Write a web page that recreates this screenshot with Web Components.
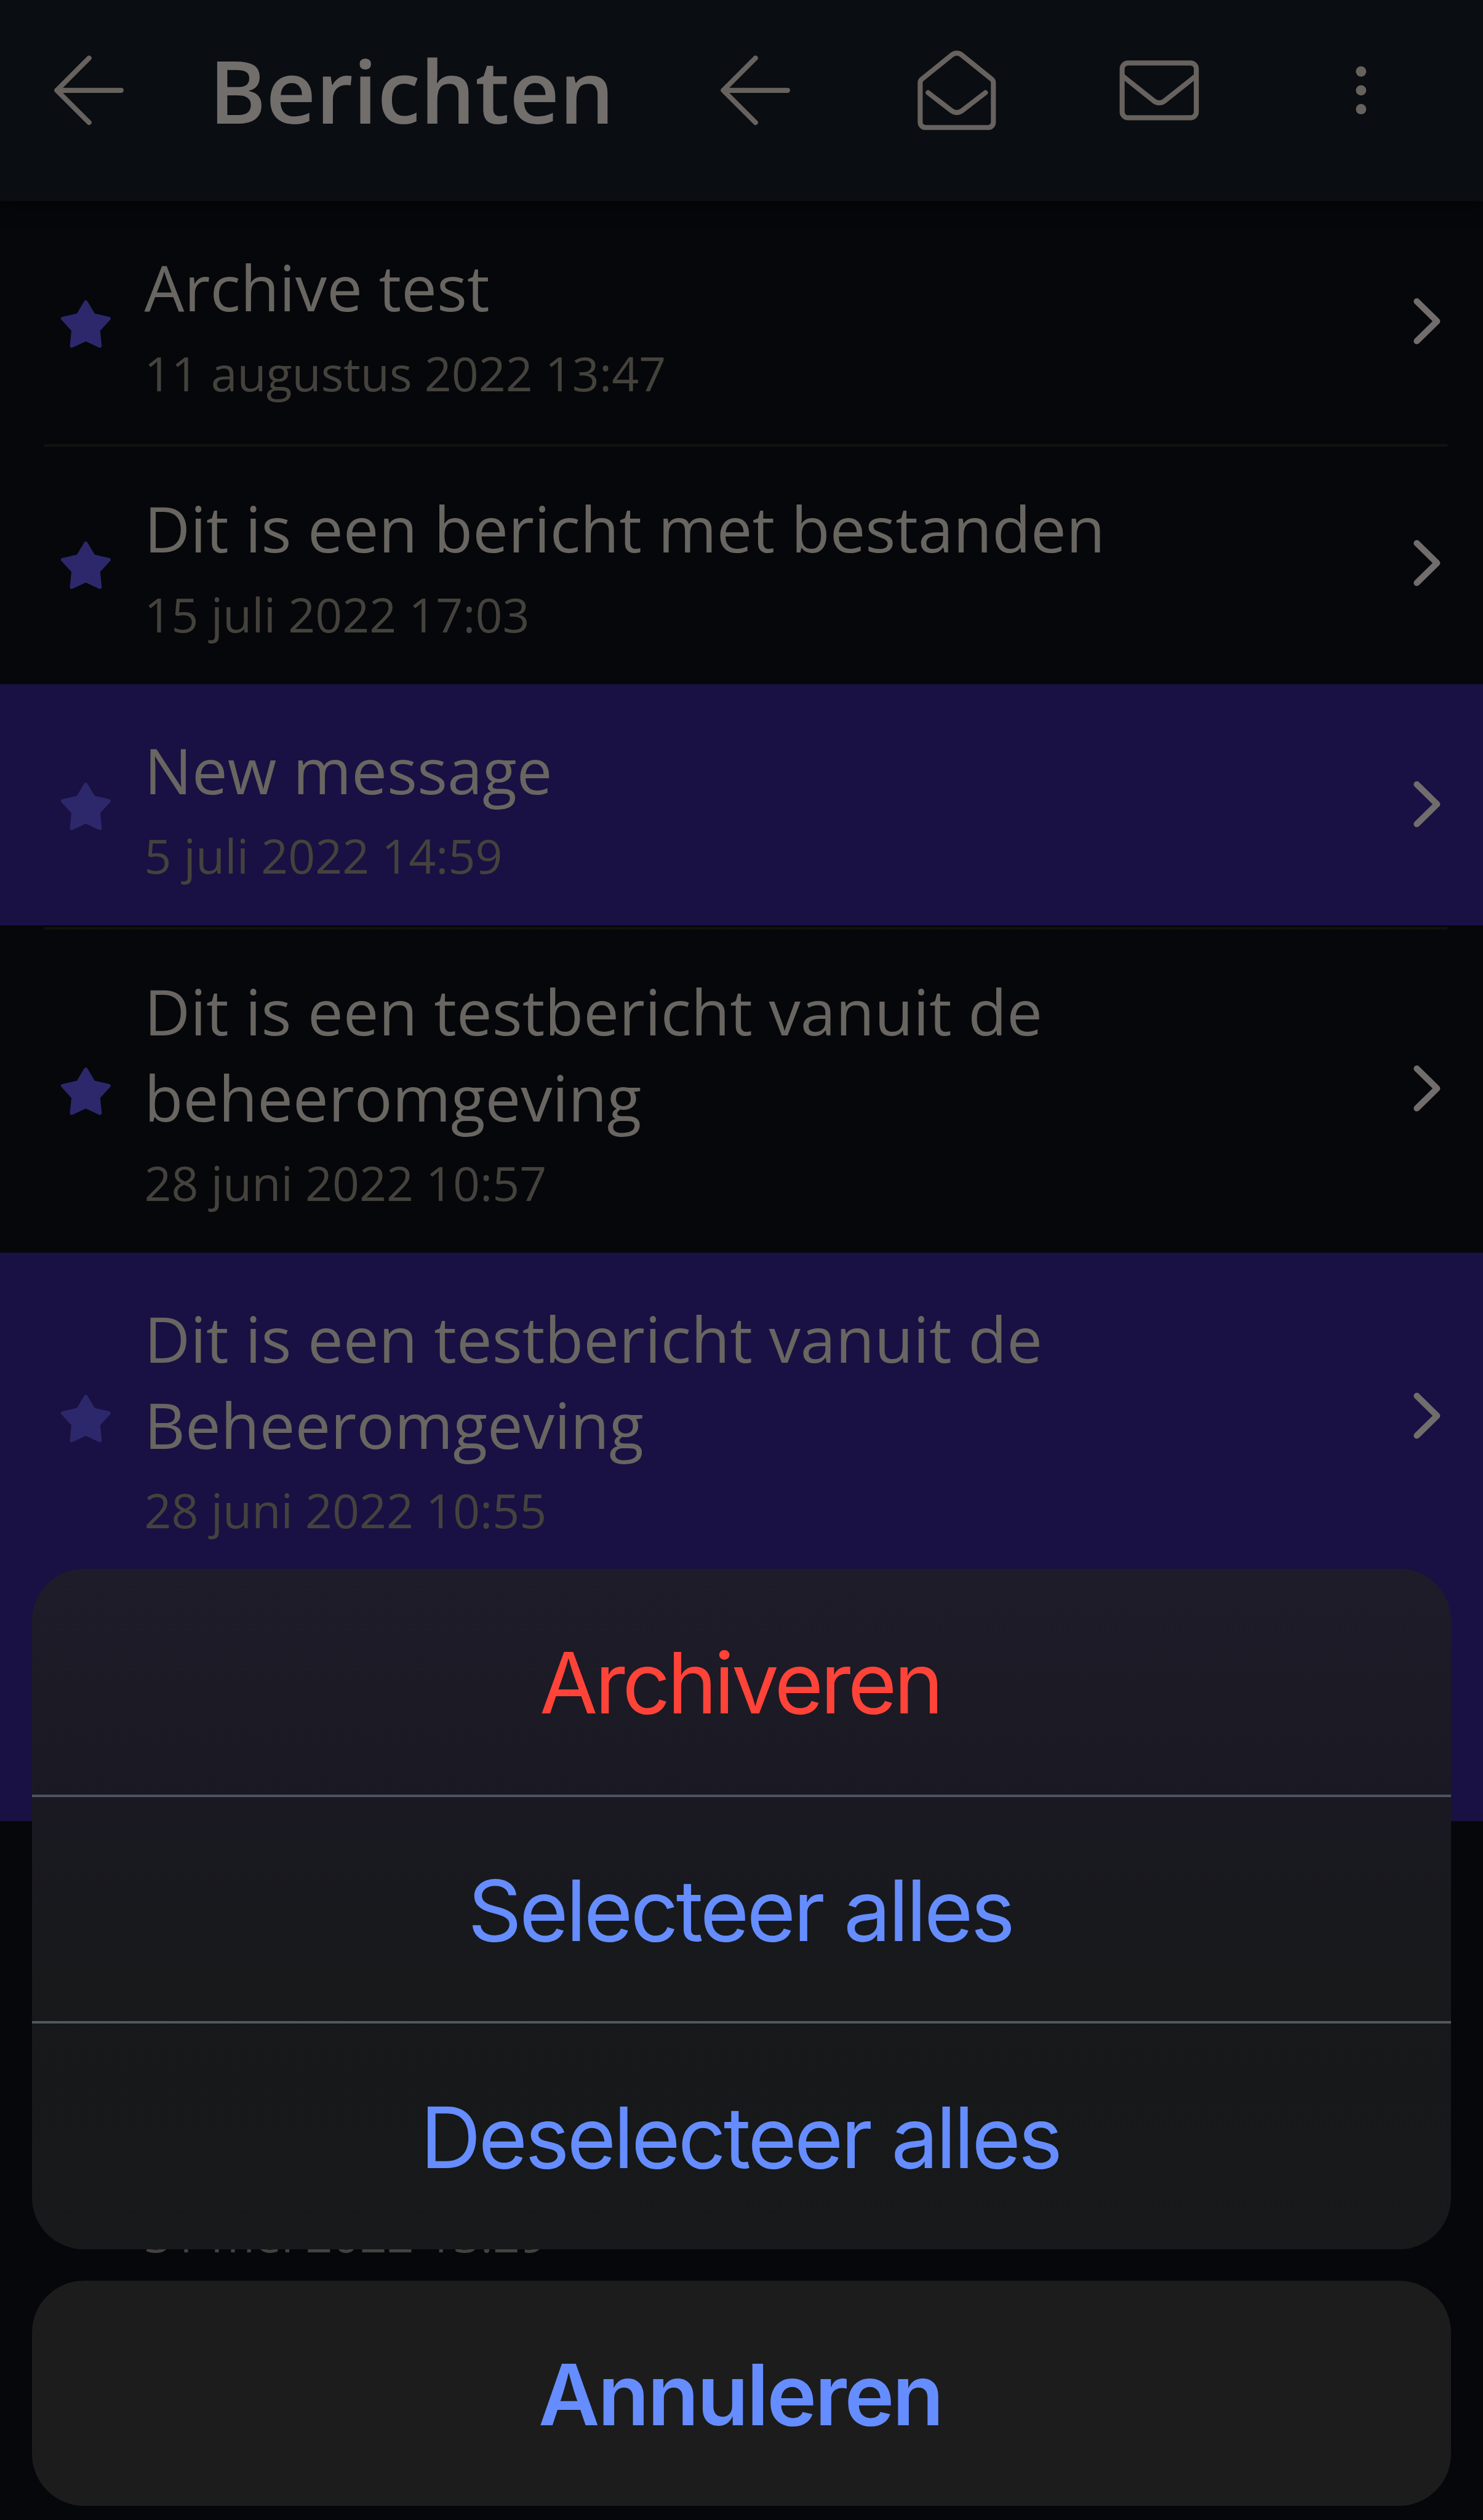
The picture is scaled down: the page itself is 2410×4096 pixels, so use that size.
<!DOCTYPE html>
<html lang="nl">
<head>
<meta charset="utf-8">
<title>Berichten</title>
<style>
  /* 1rem = 1 point on a 414 point wide phone */
  html {
    font-size: calc(100vw / 414);
  }
  body {
    margin: 0;
    background: #05070a;
    font-family: "Open Sans", sans-serif;
  }
</style>
</head>
<body>
<messages-screen>
  <app-header slot="header">
    Berichten
    <app-icon slot="back" name="arrow"></app-icon>
    <app-icon slot="actions" name="arrow"></app-icon>
    <app-icon slot="actions" name="mail-open"></app-icon>
    <app-icon slot="actions" name="mail"></app-icon>
    <app-icon slot="actions" name="dots"></app-icon>
  </app-header>

  <message-row>Archive test<span slot="date">11 augustus 2022 13:47</span></message-row>
  <message-row>Dit is een bericht met bestanden<span slot="date">15 juli 2022 17:03</span></message-row>
  <message-row selected>New message<span slot="date">5 juli 2022 14:59</span></message-row>
  <message-row>Dit is een testbericht vanuit de beheeromgeving<span slot="date">28 juni 2022 10:57</span></message-row>
  <message-row selected>Dit is een testbericht vanuit de Beheeromgeving<span slot="date">28 juni 2022 10:55</span></message-row>
  <message-row selected></message-row>
  <message-row></message-row>
  <message-row><span slot="date">31 mei 2022 13:29</span></message-row>

  <action-sheet slot="sheet">
    <sheet-button kind="danger">Archiveren</sheet-button>
    <sheet-button>Selecteer alles</sheet-button>
    <sheet-button>Deselecteer alles</sheet-button>
    <sheet-button slot="cancel" kind="cancel">Annuleren</sheet-button>
  </action-sheet>
</messages-screen>

<script>
const ICONS = {
  'arrow': '<path d="M21.1 12H3.15M12.15 3 3.15 12l9 9"/>',
  'mail-open': '<path d="M1.78 9.9v11a1.48 1.48 0 0 0 1.48 1.48h17.48a1.48 1.48 0 0 0 1.48-1.48v-11c0-.4-.17-.78-.48-1.04L13.35 2.1a2.1 2.1 0 0 0-2.7 0L2.26 8.86c-.31.26-.48.64-.48 1.04z"/><path d="m4 12.65 6.55 5.05a2.4 2.4 0 0 0 2.9 0L20 12.65"/>',
  'mail': '<rect x="1.65" y="4.37" width="20.7" height="15.28" rx="1.6"/><path d="m1.9 8.1 8.6 6.85a2.4 2.4 0 0 0 3 0l8.6-6.85"/>',
  'dots': '<g fill="currentColor" stroke="none"><circle cx="12" cy="6.75" r="1.45"/><circle cx="12" cy="12" r="1.45"/><circle cx="12" cy="17.25" r="1.45"/></g>'
};

class AppIcon extends HTMLElement {
  connectedCallback() {
    this.attachShadow({ mode: 'open' });
    this.shadowRoot.innerHTML = `
      <style>
        :host {
          display: block;
          width: 24rem;
          height: 24rem;
          color: #67625e;
        }
        svg {
          display: block;
          width: 100%;
          height: 100%;
        }
      </style>
      <svg viewBox="0 0 24 24" fill="none" stroke="currentColor" stroke-width="1.4" stroke-linecap="round" stroke-linejoin="round">
        ${ICONS[this.getAttribute('name')]}
      </svg>
    `;
  }
}
customElements.define('app-icon', AppIcon);

class AppHeader extends HTMLElement {
  connectedCallback() {
    this.attachShadow({ mode: 'open' });
    this.shadowRoot.innerHTML = `
      <style>
        :host {
          display: block;
          position: relative;
          background: #0a0d11;
          box-shadow: 0 1rem 4rem rgba(0, 0, 0, 0.6);
        }
        header {
          box-sizing: border-box;
          height: 56.15rem;
          padding: 0 22rem 5.6rem 12.75rem;
          display: flex;
          align-items: center;
        }
        h1 {
          margin: 0 0 0 21.6rem;
          font-size: 24.15rem;
          line-height: 32rem;
          font-weight: 600;
          color: #726e6c;
          white-space: nowrap;
        }
        .actions {
          margin-left: auto;
          display: flex;
          gap: 32.43rem;
        }
      </style>
      <header>
        <slot name="back"></slot>
        <h1><slot></slot></h1>
        <div class="actions"><slot name="actions"></slot></div>
      </header>
    `;
  }
}
customElements.define('app-header', AppHeader);

class MessageRow extends HTMLElement {
  connectedCallback() {
    this.attachShadow({ mode: 'open' });
    this.shadowRoot.innerHTML = `
      <style>
        :host {
          display: block;
          color: #696561;
        }
        .row {
          box-sizing: border-box;
          min-height: 67.4rem;
          padding: 0 11.9rem 0 17.05rem;
          display: flex;
          align-items: center;
          /* hairline sits just under the top edge of the row */
          background: linear-gradient(#12120f, #12120f) 12.3rem 0.5rem / 391.7rem 0.65rem no-repeat;
        }
        :host(:first-of-type) .row {
          background: none;
        }
        :host([selected]) .row {
          background: #191143;
        }
        .star {
          flex: none;
          width: 14rem;
          height: 13.6rem;
          margin: 1.1rem 9.25rem 0 0;
        }
        .text {
          flex: 1;
          align-self: flex-start;
          padding: 12.05rem 60rem 7.35rem 0;
        }
        .title {
          min-height: 24rem;
          font-size: 17.66rem;
          line-height: 24rem;
        }
        .date {
          min-height: 24rem;
          font-size: 13.23rem;
          line-height: 24rem;
          color: #45423d;
        }
        .chevron {
          flex: none;
          width: 8rem;
          height: 14rem;
          color: #716d6c;
        }
      </style>
      <div class="row">
        <svg class="star" viewBox="0 0 14 13.6" fill="#2d286b" stroke="#2d286b" stroke-width="1" stroke-linejoin="round">
          <path d="M6.95.7 9.1 4.3l4.3 1-2.95 3.2.45 4.45-3.95-1.85L3 12.95l.45-4.45L.5 5.3l4.3-1z"/>
        </svg>
        <div class="text">
          <div class="title"><slot></slot></div>
          <div class="date"><slot name="date"></slot></div>
        </div>
        <svg class="chevron" viewBox="0 0 8 14" fill="none" stroke="currentColor" stroke-width="1.75" stroke-linecap="round" stroke-linejoin="round">
          <path d="M1.45 1.35 7.1 6.9l-5.65 5.55"/>
        </svg>
      </div>
    `;
  }
}
customElements.define('message-row', MessageRow);

class SheetButton extends HTMLElement {
  connectedCallback() {
    this.attachShadow({ mode: 'open' });
    this.shadowRoot.innerHTML = `
      <style>
        :host {
          display: flex;
          justify-content: center;
          align-items: center;
          box-sizing: border-box;
          height: 63.3rem;
          padding: 0.7rem 0.7rem 0 0;
          font: 400 23.5rem/30rem Inter, sans-serif;
          letter-spacing: -0.7rem;
          color: #658dff;
          white-space: nowrap;
        }
        :host([kind="danger"]) {
          letter-spacing: -0.82rem;
          color: #ff4338;
        }
        :host([kind="cancel"]) {
          height: 62.8rem;
          font-weight: 600;
          letter-spacing: -0.52rem;
        }
      </style>
      <slot></slot>
    `;
  }
}
customElements.define('sheet-button', SheetButton);

class ActionSheet extends HTMLElement {
  connectedCallback() {
    this.attachShadow({ mode: 'open' });
    this.shadowRoot.innerHTML = `
      <style>
        :host {
          display: flex;
          flex-direction: column;
          gap: 8.9rem;
        }
        .group, .cancel {
          border-radius: 14.5rem;
          overflow: hidden;
        }
        .group {
          background: linear-gradient(#1e1c29, #1a1922 35%, #17191b 58%, #161819 75%, #17191a);
        }
        .cancel {
          background: #1c1c1c;
        }
        .group ::slotted(:first-child) {
          height: 62.95rem;
        }
        .group ::slotted(:not(:first-child)) {
          border-top: 0.7rem solid #4c5466;
        }
        .group ::slotted(:nth-child(3)) {
          height: 63.65rem;
          border-top-color: #4f585d;
        }
      </style>
      <div class="group"><slot></slot></div>
      <div class="cancel"><slot name="cancel"></slot></div>
    `;
  }
}
customElements.define('action-sheet', ActionSheet);

class MessagesScreen extends HTMLElement {
  connectedCallback() {
    this.attachShadow({ mode: 'open' });
    this.shadowRoot.innerHTML = `
      <style>
        :host {
          display: block;
          position: relative;
          height: 100vh;
          overflow: hidden;
        }
        .sheet {
          position: absolute;
          left: 8.87rem;
          right: 8.87rem;
          bottom: 3.95rem;
        }
      </style>
      <slot name="header"></slot>
      <main><slot></slot></main>
      <div class="sheet"><slot name="sheet"></slot></div>
    `;
  }
}
customElements.define('messages-screen', MessagesScreen);
</script>
</body>
</html>
